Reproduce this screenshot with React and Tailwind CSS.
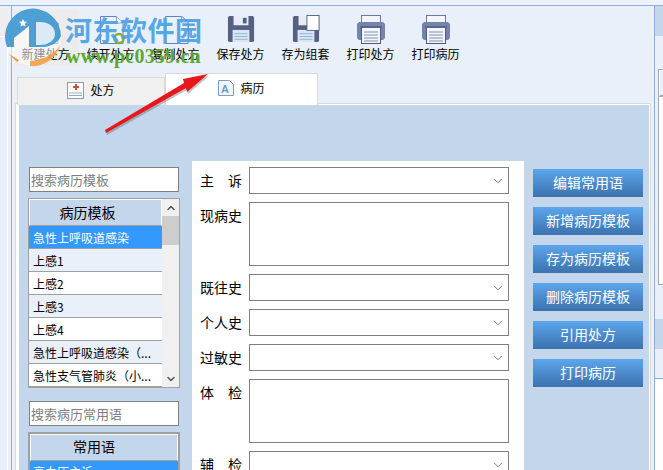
import React from 'react';
import { ChevronDown, ChevronUp } from 'lucide-react';

const font = { fontFamily: '"Noto Sans CJK SC", "Noto Sans", sans-serif' };

const DocIcon = ({ variant }) => (
  <svg width="30" height="30" viewBox="0 0 30 30" fill="none">
    {variant === 'copy' && <path d="M10.500 1.500h11l6 6v19h-6" fill="#f4f7fc" stroke="#8b9cc0" />}
    <path d="M4.500 1.500h16l6.500 6.500v20.500h-22.500z" fill="#eaf1fa" stroke="#5f86bd" />
    <path d="M20.500 1.500v6.500h6.500" fill="#fff" stroke="#8ba6cc" />
    {variant === 'open' && <circle cx="23" cy="23.500" r="4.500" stroke="#7fae2e" strokeWidth="2.500" fill="#fff" />}
  </svg>
);

const FloppyIcon = ({ paper }) => (
  <svg width="28" height="28" viewBox="0 0 30 30">
    <path d="M3 1h24a2 2 0 0 1 2 2v24a2 2 0 0 1-2 2H3a2 2 0 0 1-2-2V3a2 2 0 0 1 2-2z" fill="#566182" />
    <rect x="7" y="1" width="16" height="10" fill="#e6edf7" />
    <rect x="17" y="3" width="4" height="6" fill="#566182" />
    <rect x="6" y="16" width="18" height="13" fill="#d9e6f3" />
    <path d="M8 20h14M8 23h14M8 26h14" stroke="#8fb0d0" />
    {paper && <rect x="16" y="0.500" width="13" height="16" fill="#fff" stroke="#566182" />}
  </svg>
);

const PrinterIcon = () => (
  <svg width="28" height="29" viewBox="0 0 28 29">
    <rect x="4.500" y="0.500" width="19" height="8" fill="#f3f6fb" stroke="#6b79a0" />
    <path d="M2 7h24l2 2v14l-2 2H2l-2-2V9z" fill="#7584ad" />
    <rect x="4.500" y="12.500" width="19" height="16" fill="#f3f6fb" stroke="#4f5a7c" />
    <rect x="3" y="11" width="22" height="2" fill="#5b6788" />
    <path d="M7 17h14M7 20h14M7 23h14M7 26h14" stroke="#7f90bb" />
  </svg>
);

const toolbarItems = [
  { label: '新建处方', icon: <DocIcon />, hover: true },
  { label: '续开处方', icon: <DocIcon variant="open" /> },
  { label: '复制处方', icon: <DocIcon variant="copy" /> },
  { label: '保存处方', icon: <FloppyIcon /> },
  { label: '存为组套', icon: <FloppyIcon paper /> },
  { label: '打印处方', icon: <PrinterIcon /> },
  { label: '打印病历', icon: <PrinterIcon /> },
];

const templates = [
  { name: '急性上呼吸道感染', bg: 'bg-[#3399ff] text-white' },
  { name: '上感1', bg: 'bg-[#e9f0f9]' },
  { name: '上感2', bg: 'bg-white' },
  { name: '上感3', bg: 'bg-[#e9f0f9]' },
  { name: '上感4', bg: 'bg-white' },
  { name: '急性上呼吸道感染（...', bg: 'bg-[#e9f0f9]' },
  { name: '急性支气管肺炎（小...', bg: 'bg-white' },
];

const actions = ['编辑常用语', '新增病历模板', '存为病历模板', '删除病历模板', '引用处方', '打印病历'];

const SearchBox = ({ placeholder }) => (
  <input
    readOnly
    placeholder={placeholder}
    className="mx-px block h-[25px] w-[150px] border border-[#808080] bg-white px-[1px] pb-[1px] text-[13px] outline-none placeholder:text-[#808080]"
  />
);

const ListHeader = ({ children, className }) => (
  <div className={`flex h-[27px] items-center justify-center border border-white border-b-[#a0a0a0] bg-[#c4d6ec] text-[14px] text-black ${className}`}>
    {children}
  </div>
);

const Label = ({ chars, top }) => (
  <div className={`flex w-[42px] shrink-0 text-[14px] leading-[20px] text-black ${top ? 'pt-[3px]' : 'self-center pb-[2px]'} ${chars.length === 2 ? 'w-[40px] justify-between' : ''}`}>
    {chars.map((c) => <span key={c}>{c}</span>)}
  </div>
);

const SelectRow = ({ chars }) => (
  <div className="flex h-[27px] shrink-0 justify-between">
    <Label chars={chars} />
    <div className="flex h-full w-[260px] items-center justify-end border border-[#808080] bg-white pr-[3px]">
      <ChevronDown size={14} strokeWidth={1.2} className="text-[#444]" />
    </div>
  </div>
);

const AreaRow = ({ chars }) => (
  <div className="flex h-[64px] shrink-0 justify-between">
    <Label chars={chars} top />
    <div className="h-full w-[260px] border border-[#808080] bg-white" />
  </div>
);

const Watermark = () => (
  <div className="pointer-events-none absolute left-0 top-0 z-20 h-[70px] w-[210px]">
    <svg className="absolute left-0 top-0" width="70" height="70" viewBox="0 0 70 70">
      <circle cx="33" cy="38" r="28" fill="#fff" fillOpacity="0.55" />
      <path d="M7 47A28 28 0 1 1 61 36C59 41 53 46 44 47L20 47C14 47 10 47 7 47z" fill="#3f97d0" fillOpacity="0.92" />
      <path d="M30 66A28 28 0 0 0 60 45C56 53 44 60 30 61z" fill="#f39a3c" fillOpacity="0.85" />
      <path d="M9 54l10 6-2 2z" fill="#f39a3c" />
      <path d="M14 38L29 26V47H14z" fill="#f7f7f7" />
      <path d="M36 22h4c10 0 15 6 15 12s-6 11-15 11h-4z" fill="#f4f7fb" fillOpacity="0.85" />
      <path d="M23 19l1.200 2.500 2.800.300-2 2 .500 2.800-2.500-1.400-2.500 1.400.500-2.800-2-2 2.800-.300z" fill="#fff" />
    </svg>
    <div className="absolute left-[65px] top-[8px] text-[27px] font-bold leading-[44px] tracking-[0.5px] text-[#4a9fe3] opacity-90" style={{ fontFamily: '"Noto Sans CJK SC", sans-serif' }}>
      河东软件园
    </div>
    <div className="absolute left-[66px] top-[47px] text-[20px] font-bold leading-[18px] tracking-[0.2px] text-[#5aa832]" style={{ fontFamily: '"Liberation Serif", serif' }}>
      www.pc0359.cn
    </div>
  </div>
);

const RedArrow = () => (
  <svg className="pointer-events-none absolute left-[100px] top-[68px] z-20" width="115" height="70" viewBox="0 0 115 70">
    <path d="M5 62L84 15 83 11 108 6 87 24 86 20 6 65z" fill="#555" fillOpacity="0.35" transform="translate(1 2)" />
    <path d="M5 62L84 15 83 11 108 6 87 24 86 20 6 65z" fill="#e8171b" />
  </svg>
);

export default function App() {
  return (
    <div className="relative flex h-[470px] w-[663px] flex-col overflow-hidden bg-[#e9f0f9]" style={font}>
      <div className="h-[5px] shrink-0 bg-[#edf2f9]" />
      <div className="flex min-h-0 flex-1 border-t border-[#8eb0d8]">
        {/* left strip */}
        <div className="flex w-[11px] shrink-0 flex-col">
          <div className="mt-[2px] h-[29px] w-[8px] border-b border-white bg-[#eeeeee]" />
          <div className="w-[8px] flex-1 border-r border-white" />
        </div>

        {/* main column */}
        <div className="flex w-[644px] shrink-0 flex-col border-x border-[#8eb0d8]">
          <div className="flex h-[67px] shrink-0 pl-px">
            {toolbarItems.map((item) => (
              <div key={item.label} className="relative flex w-[65px] flex-col items-center pt-[8px]">
                {item.hover && <div className="absolute left-[2px] top-[4px] h-[56px] w-[64px] bg-[#ececec]" />}
                <div className="relative flex h-[30px] w-[30px] items-start justify-center pt-px">{item.icon}</div>
                <div className="relative mt-[2px] text-[12px] leading-[16px] text-black">{item.label}</div>
              </div>
            ))}
          </div>

          <div className="relative z-10 -mb-[2px] flex h-[32px] shrink-0 items-end pl-[5px]">
            <div className="flex h-[28px] w-[148px] items-center justify-center gap-[6px] border border-b-0 border-[#d9d9d9] bg-[#f0f0f0] pb-[3px] text-[12px] text-black">
              <svg width="17" height="17" viewBox="0 0 17 17">
                <rect x="0.500" y="0.500" width="16" height="16" fill="#fff" stroke="#7d9cc6" />
                <path d="M6 5h6M9 2v6" stroke="#c8502e" strokeWidth="2" />
                <path d="M2 11h13M2 13.500h13" stroke="#9aa9c0" />
              </svg>
              处方
            </div>
            <div className="flex h-[32px] w-[153px] items-center justify-center gap-[6px] border border-b-0 border-[#d9d9d9] bg-white pb-[3px] text-[12px] text-black">
              <svg width="16" height="16" viewBox="0 0 16 16">
                <path d="M.5.500h11l4 4v11H.5z" fill="#f2f6fb" stroke="#7d9cc6" />
                <text x="3" y="13" fontSize="11" fontWeight="700" fill="#6f9ad0" fontFamily="Liberation Sans">A</text>
              </svg>
              病历
            </div>
          </div>

          <div className="ml-[3px] min-h-0 w-[636px] flex-1 border-x border-t border-[#d9d9d9]">
            <div className="flex h-full items-start border-l-[3px] border-r border-t border-white bg-[#c4d6ec] pl-[9px] pt-[56px]">
              <div className="mt-[6px] w-[152px] shrink-0">
                <SearchBox placeholder="搜索病历模板" />
                <div className="mt-[6px] flex h-[190px] border border-[#a0a0a0] bg-white">
                  <div className="min-w-0 flex-1">
                    <ListHeader className="pr-[16px]">病历模板</ListHeader>
                    {templates.map((t) => (
                      <div key={t.name} className={`h-[23px] truncate border-b border-[#a0a0a0] pl-[4px] text-[12px] leading-[23px] text-black ${t.bg}`}>
                        {t.name}
                      </div>
                    ))}
                  </div>
                  <div className="flex w-[17px] shrink-0 flex-col items-center bg-[#f0f0f0]">
                    <ChevronUp size={12} strokeWidth={3} className="mt-[3px] shrink-0 text-[#555]" />
                    <div className="mt-[2px] h-[29px] w-full shrink-0 bg-[#cdcdcd]" />
                    <ChevronDown size={12} strokeWidth={3} className="mb-[2px] mt-auto shrink-0 text-[#555]" />
                  </div>
                </div>
                <div className="mt-[13px]">
                  <SearchBox placeholder="搜索病历常用语" />
                </div>
                <div className="mt-[6px] border-2 border-[#a0a0a0] bg-white">
                  <ListHeader className="pb-[2px] pr-[20px]">常用语</ListHeader>
                  <div className="h-[23px] bg-[#3399ff] pl-[3px] text-[12px] leading-[22px] text-white">高血压主诉</div>
                </div>
              </div>

              <div className="ml-[12px] flex h-[330px] w-[332px] shrink-0 flex-col gap-[8px] bg-white pl-[8px] pr-[15px] pt-[6px]">
                <SelectRow chars={['主', '诉']} />
                <AreaRow chars={['现', '病', '史']} />
                <SelectRow chars={['既', '往', '史']} />
                <SelectRow chars={['个', '人', '史']} />
                <SelectRow chars={['过', '敏', '史']} />
                <AreaRow chars={['体', '检']} />
                <SelectRow chars={['辅', '检']} />
              </div>

              <div className="ml-[9px] mt-[8px] flex w-[110px] shrink-0 flex-col gap-[10px]">
                {actions.map((a) => (
                  <div key={a} className="flex h-[28px] items-center justify-center bg-gradient-to-b from-[#5ca6ee] to-[#3c72ad] pb-[1px] text-[14px] text-white">
                    {a}
                  </div>
                ))}
              </div>
            </div>
          </div>
        </div>

        {/* right strip */}
        <div className="flex min-w-0 flex-1 flex-col">
          <div className="h-[30px] shrink-0 bg-[#c4d6ec]" />
          <div className="h-[33px] shrink-0" />
          <div className="ml-[3px] h-[216px] shrink-0 border border-r-0 border-[#a8a8a8] bg-white">
            <div className="h-[27px] border-b-2 border-l border-[#a8a8a8] border-l-white bg-[#e9f0f9]" />
          </div>
          <div className="h-[34px] shrink-0" />
          <div className="h-[30px] shrink-0 bg-[#c4d6ec]" />
          <div className="h-[30px] shrink-0 border-b border-[#8eb0d8]" />
          <div className="flex-1 bg-white" />
        </div>
      </div>

      <Watermark />
      <RedArrow />
    </div>
  );
}
